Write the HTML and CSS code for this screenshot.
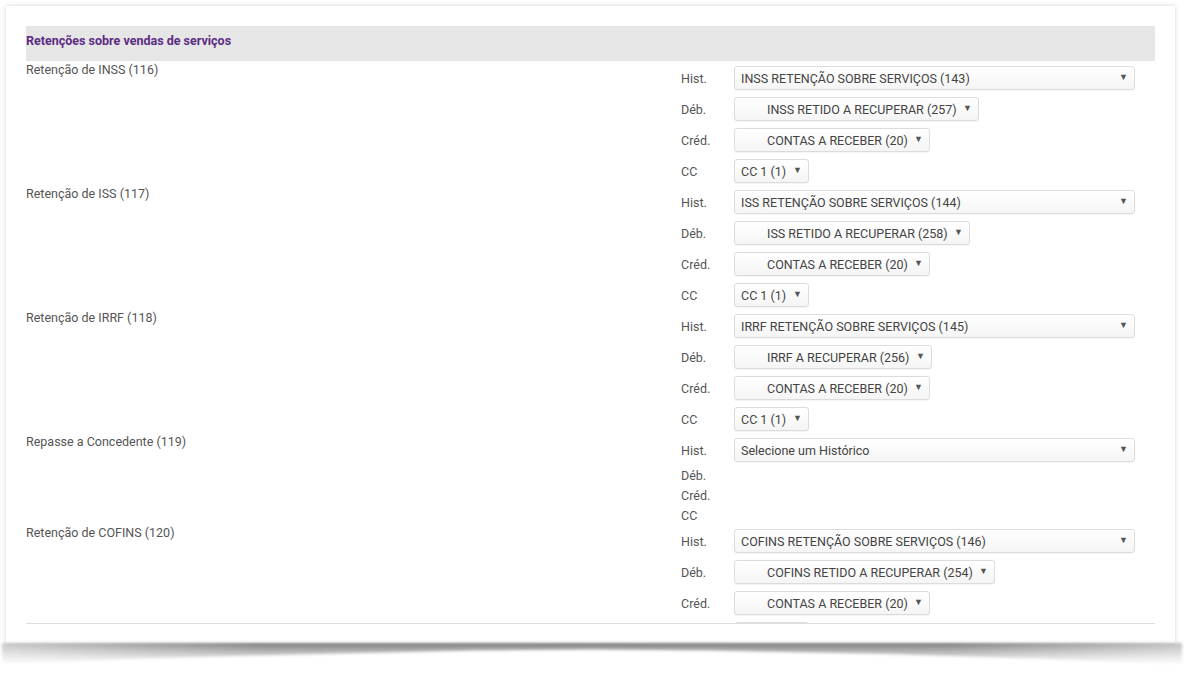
FILE: index.html
```html
<!DOCTYPE html>
<html lang="pt-BR">
<head>
    <meta charset="UTF-8">
    <title>Retenções sobre vendas de serviços</title>
    <link rel="stylesheet" href="styles.css">
</head>
<body>
    <div class="pagina">
        <div class="card">
            <div class="cabecalho">Retenções sobre vendas de serviços</div>

            <div class="lista">
                <!-- INSS -->
                <div class="grupo">
                    <div class="grupo-nome">Retenção de INSS (116)</div>
                    <div class="campos">
                        <div class="campo">
                            <label>Hist.</label>
                            <span class="sel"><select class="hist"><option>INSS RETENÇÃO SOBRE SERVIÇOS (143)</option></select></span>
                        </div>
                        <div class="campo">
                            <label>Déb.</label>
                            <span class="sel"><select class="conta"><option>INSS RETIDO A RECUPERAR (257)</option></select></span>
                        </div>
                        <div class="campo">
                            <label>Créd.</label>
                            <span class="sel"><select class="conta"><option>CONTAS A RECEBER (20)</option></select></span>
                        </div>
                        <div class="campo">
                            <label>CC</label>
                            <span class="sel"><select><option>CC 1 (1)</option></select></span>
                        </div>
                    </div>
                </div>

                <!-- ISS -->
                <div class="grupo">
                    <div class="grupo-nome">Retenção de ISS (117)</div>
                    <div class="campos">
                        <div class="campo">
                            <label>Hist.</label>
                            <span class="sel"><select class="hist"><option>ISS RETENÇÃO SOBRE SERVIÇOS (144)</option></select></span>
                        </div>
                        <div class="campo">
                            <label>Déb.</label>
                            <span class="sel"><select class="conta"><option>ISS RETIDO A RECUPERAR (258)</option></select></span>
                        </div>
                        <div class="campo">
                            <label>Créd.</label>
                            <span class="sel"><select class="conta"><option>CONTAS A RECEBER (20)</option></select></span>
                        </div>
                        <div class="campo">
                            <label>CC</label>
                            <span class="sel"><select><option>CC 1 (1)</option></select></span>
                        </div>
                    </div>
                </div>

                <!-- IRRF -->
                <div class="grupo">
                    <div class="grupo-nome">Retenção de IRRF (118)</div>
                    <div class="campos">
                        <div class="campo">
                            <label>Hist.</label>
                            <span class="sel"><select class="hist"><option>IRRF RETENÇÃO SOBRE SERVIÇOS (145)</option></select></span>
                        </div>
                        <div class="campo">
                            <label>Déb.</label>
                            <span class="sel"><select class="conta"><option>IRRF A RECUPERAR (256)</option></select></span>
                        </div>
                        <div class="campo">
                            <label>Créd.</label>
                            <span class="sel"><select class="conta"><option>CONTAS A RECEBER (20)</option></select></span>
                        </div>
                        <div class="campo">
                            <label>CC</label>
                            <span class="sel"><select><option>CC 1 (1)</option></select></span>
                        </div>
                    </div>
                </div>

                <!-- Repasse: sem histórico escolhido -->
                <div class="grupo">
                    <div class="grupo-nome">Repasse a Concedente (119)</div>
                    <div class="campos">
                        <div class="campo">
                            <label>Hist.</label>
                            <span class="sel"><select class="hist"><option>Selecione um Histórico</option></select></span>
                        </div>
                        <div class="campo"><label>Déb.</label></div>
                        <div class="campo"><label>Créd.</label></div>
                        <div class="campo"><label>CC</label></div>
                    </div>
                </div>

                <!-- COFINS -->
                <div class="grupo">
                    <div class="grupo-nome">Retenção de COFINS (120)</div>
                    <div class="campos">
                        <div class="campo">
                            <label>Hist.</label>
                            <span class="sel"><select class="hist"><option>COFINS RETENÇÃO SOBRE SERVIÇOS (146)</option></select></span>
                        </div>
                        <div class="campo">
                            <label>Déb.</label>
                            <span class="sel"><select class="conta"><option>COFINS RETIDO A RECUPERAR (254)</option></select></span>
                        </div>
                        <div class="campo">
                            <label>Créd.</label>
                            <span class="sel"><select class="conta"><option>CONTAS A RECEBER (20)</option></select></span>
                        </div>
                        <div class="campo">
                            <label>CC</label>
                            <span class="sel"><select><option>CC 1 (1)</option></select></span>
                        </div>
                    </div>
                </div>
            </div>
        </div>
        <!-- sombra curva debaixo do cartão -->
        <div class="sombra"><div></div></div>
    </div>
</body>
</html>
```

FILE: styles.css
```css
body {
    margin: 0;
    background-color: #fff;
    font-family: 'Roboto', 'Liberation Sans', sans-serif;
    font-size: 12.5px;
    color: #555;
}

.pagina {
    padding: 6px 0 0 6px;
}

.card {
    width: 1169px;
    height: 637px;
    box-sizing: border-box;
    padding: 20px;
    background-color: #fff;
    box-shadow: 0 0 4px rgba(0,0,0,0.18);
}

.sombra {
    width: 1180px;
    height: 22px;
    margin-left: -4px;
    filter: blur(1.5px);
}

.sombra div {
    height: 100%;
    background:
        linear-gradient(to right, rgba(255,255,255,0.55), rgba(255,255,255,0) 22%, rgba(255,255,255,0) 80%, rgba(255,255,255,0.5)),
        linear-gradient(to bottom, rgba(0,0,0,0.5), rgba(0,0,0,0.12) 70%, rgba(0,0,0,0));
    clip-path: polygon(0 0, 100% 0, 100% 100%, 88% 72%, 75% 50%, 60% 34%, 50% 30%, 40% 34%, 25% 52%, 12% 70%, 0 95%);
}

.cabecalho {
    background-color: #e6e6e6;
    color: #5b2c83;
    font-weight: bold;
    line-height: 16px;
    padding: 7px 0 12px;
    border-bottom: 1px solid #fff;
}

.lista {
    height: 561px;
    overflow: hidden;
    border-bottom: 1px solid #ddd;
}

.grupo {
    display: grid;
    grid-template-columns: 655px 1fr;
}

.grupo-nome {
    padding-top: 1px;
    line-height: 14px;
}

.campo {
    display: flex;
    align-items: center;
    padding: 4px 0 3px;
    line-height: 13px;
}

.campo label {
    width: 53px;
    flex-shrink: 0;
}

.sel {
    position: relative;
    display: inline-block;
}

.sel::after {
    content: "\25BC";
    position: absolute;
    right: 7px;
    top: 6px;
    font-size: 9px;
    line-height: 11px;
    color: #555;
    pointer-events: none;
}

select {
    -webkit-appearance: none;
    appearance: none;
    height: 24px;
    margin: 0;
    padding: 0 21px 0 6px;
    border: 1px solid #dcdcdc;
    border-radius: 3px;
    background: linear-gradient(#fff, #f5f5f5);
    box-shadow: 0 1px 1px rgba(0,0,0,0.04);
    font-family: inherit;
    font-size: 12.5px;
    color: #444;
}

select.hist {
    width: 401px;
}

select.conta {
    padding-left: 32px;
}
```
